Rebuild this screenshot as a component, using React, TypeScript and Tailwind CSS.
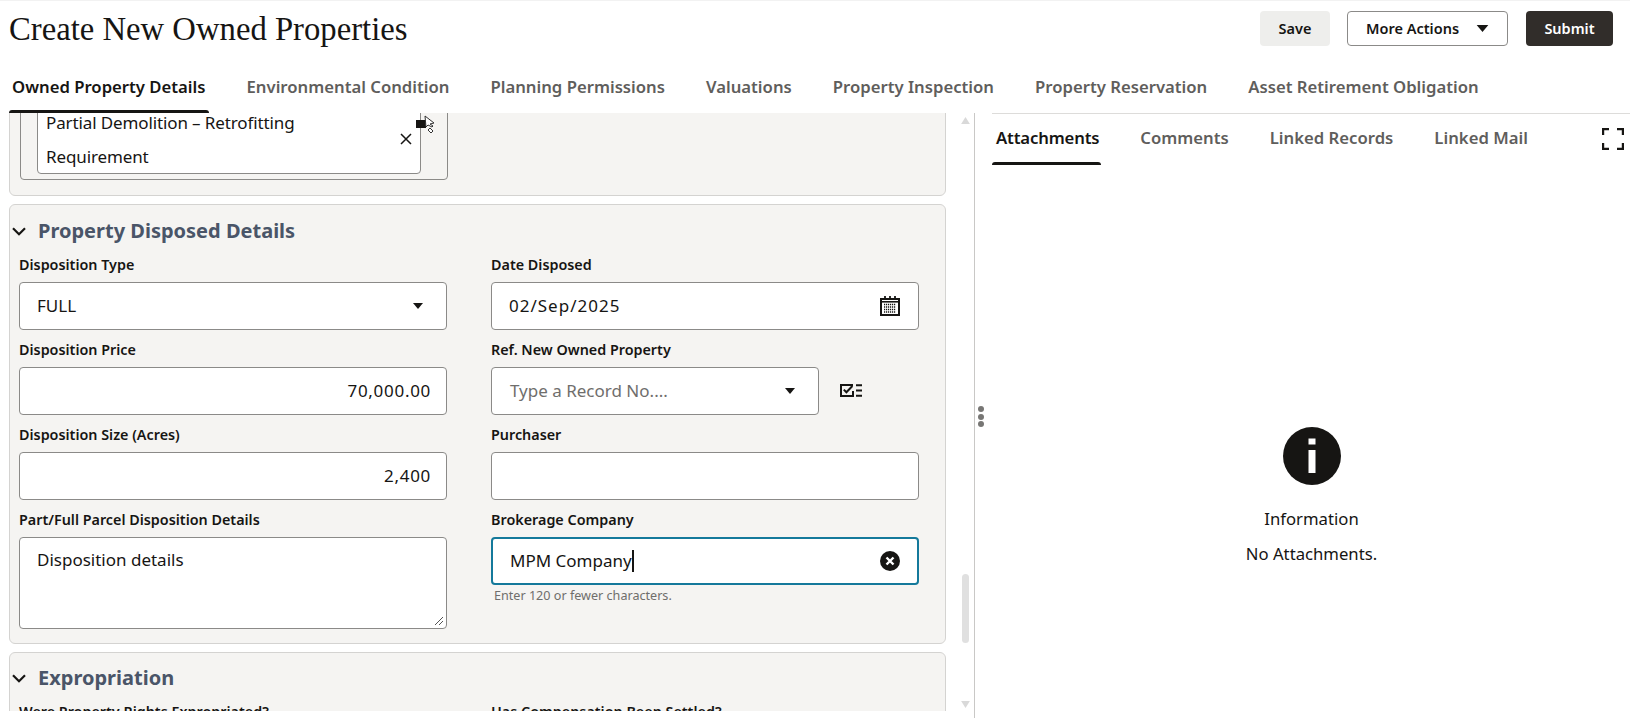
import React from 'react';

const mainTabs = [
  'Owned Property Details',
  'Environmental Condition',
  'Planning Permissions',
  'Valuations',
  'Property Inspection',
  'Property Reservation',
  'Asset Retirement Obligation',
];

const sideTabs = ['Attachments', 'Comments', 'Linked Records', 'Linked Mail'];

const Caret = ({ className = '' }: { className?: string }) => (
  <svg viewBox="0 0 10 6" className={`w-[10px] h-[6px] shrink-0 ${className}`}>
    <path d="M0 0h10L5 6z" fill="#161513" />
  </svg>
);

const Chevron = () => (
  <svg viewBox="0 0 14 9" className="w-[14px] h-[9px] shrink-0" fill="none">
    <path d="M1 1.2l6 6 6-6" stroke="#161513" strokeWidth="2.2" />
  </svg>
);

const CalendarIcon = () => (
  <svg viewBox="0 0 20 20" className="w-[20px] h-[20px] shrink-0" fill="none">
    <rect x="1" y="3" width="18" height="16" stroke="#161513" strokeWidth="2" />
    <path d="M1 5.8h18" stroke="#161513" strokeWidth="1.6" />
    <path d="M5 0v3M10 0v3M15 0v3" stroke="#161513" strokeWidth="1.8" />
    <path d="M4 8.5h12M4 11h12M4 13.5h12M4 16h12" stroke="#161513" strokeWidth="1.4" strokeDasharray="1.2 0.8" />
  </svg>
);

const ChecklistIcon = () => (
  <svg viewBox="0 0 22 13" className="w-[22px] h-[13px] ml-[21px] -mt-[2px] shrink-0" fill="none">
    <path d="M13 1H1v11h12V7" stroke="#161513" strokeWidth="2" />
    <path d="M3.8 5.6l2.6 2.7 6-6.3" stroke="#161513" strokeWidth="2" />
    <path d="M16 1.2h6M16 6.5h6M16 11.8h6" stroke="#161513" strokeWidth="2" />
  </svg>
);

const ClearIcon = () => (
  <svg viewBox="0 0 20 20" className="w-[20px] h-[20px] shrink-0">
    <circle cx="10" cy="10" r="10" fill="#161513" />
    <path d="M6.5 6.5l7 7M13.5 6.5l-7 7" stroke="#fff" strokeWidth="2.4" />
  </svg>
);

const ExpandIcon = () => (
  <svg viewBox="0 0 22 22" className="w-[22px] h-[22px]" fill="none">
    <path d="M1 7V1h6M15 1h6v6M21 15v6h-6M7 21H1v-6" stroke="#161513" strokeWidth="2.4" />
  </svg>
);

const ResizeHandle = () => (
  <svg viewBox="0 0 10 10" className="absolute right-[2px] bottom-[2px] w-[10px] h-[10px]" fill="none">
    <path d="M1 9l8-8M5 9l4-4" stroke="#555" strokeWidth="1" />
  </svg>
);

// Shared box for every text field on the form
const Box = ({
  children,
  right,
  align = 'left',
  className = '',
}: {
  children?: React.ReactNode;
  right?: React.ReactNode;
  align?: 'left' | 'right';
  className?: string;
}) => (
  <div className={`h-[48px] flex items-center rounded-[4px] border border-[#8b8a88] bg-white pl-[17px] ${align === 'right' ? 'pr-[15px]' : 'pr-[16px]'} text-[17px] text-[#161513] ${className}`}>
    <div className={`flex-1 min-w-0 ${align === 'right' ? 'text-right tracking-[0.7px]' : ''}`}>{children}</div>
    {right}
  </div>
);

const Field = ({ label, children }: { label: string; children: React.ReactNode }) => (
  <div className="min-w-0">
    <label className="block h-[20px] mb-[7px] text-[14.35px] leading-[20px] font-semibold text-[#161513]">{label}</label>
    {children}
  </div>
);

const SectionTitle = ({ title }: { title: string }) => (
  <div className="flex items-center h-[28px]">
    <span className="ml-[2px] w-[26px] flex"><Chevron /></span>
    <h2 className="text-[20px] leading-[28px] font-bold text-[#4a5568]">{title}</h2>
  </div>
);

const panel = 'rounded-[6px] border border-[#d4d3d1] bg-[#f5f4f2]';

export default function App() {
  return (
    <div className="w-[1630px] h-[723px] overflow-hidden bg-white border-t border-[#f2f2f2] font-['Noto_Sans',sans-serif] text-[#161513]">
      {/* Page header */}
      <header className="h-[57px] flex items-start justify-between pl-[9px] pr-[17px]">
        <h1 className="mt-[5.5px] text-[32.7px] leading-[44px] font-['Liberation_Serif',serif] text-[#161513]">Create New Owned Properties</h1>
        <div className="mt-[10px] flex items-center text-[14.5px] font-semibold">
          <button className="w-[70px] h-[35px] rounded-[4px] bg-[#eeeeec]">Save</button>
          <button className="ml-[17px] w-[161px] h-[35px] rounded-[4px] border border-[#8b8a88] bg-white flex items-center pl-[18px]">
            More Actions
            <Caret className="ml-[17px] !w-[13px] !h-[7px]" />
          </button>
          <button className="ml-[18px] w-[87px] h-[35px] rounded-[4px] bg-[#312d2a] text-white">Submit</button>
        </div>
      </header>

      <nav className="h-[55px] flex pl-[9px] gap-[35px]">
        {mainTabs.map((tab, i) => (
          <div key={tab} className="flex flex-col px-[3px]">
            <span className={`flex-1 pt-[6px] flex items-center text-[16.7px] font-semibold whitespace-nowrap ${i === 0 ? 'text-[#161513]' : 'text-[#5f5e5c]'}`}>{tab}</span>
            <span className={`h-[3px] -mx-[3px] rounded-t-[3px] ${i === 0 ? 'bg-[#161513]' : ''}`}></span>
          </div>
        ))}
      </nav>

      <div className="flex h-[610px] items-start">
        {/* Form column */}
        <div className="w-[975px] h-[605px] flex border-r border-[#c9c8c6]">
          <div className="w-[946px] h-[598px] pl-[9px] overflow-hidden">
            <div className="-mt-[25px] flex flex-col gap-[8px]">
              <section className={`${panel} h-[108px] pt-[8px] pl-[10px]`}>
                <div className="w-[428px] h-[83px] rounded-[4px] border border-[#8b8a88] pl-[16px] pt-[7px]">
                  <div className="relative w-[384px] h-[69px] rounded-[4px] border border-[#8b8a88] bg-white pl-[8px] pr-[40px] text-[17px] tracking-[-0.12px] leading-[34px]">
                    <div>Partial Demolition – Retrofitting Requirement</div>
                    <svg viewBox="0 0 12 12" className="absolute right-[8px] bottom-[28px] w-[12px] h-[12px]" fill="none">
                      <path d="M1 1l10 10M11 1L1 11" stroke="#161513" strokeWidth="1.5" />
                    </svg>
                    {/* resize handle and mouse pointer from the capture */}
                    <span className="absolute -right-[6px] top-[14px] w-[10px] h-[8px] bg-[#161513]"></span>
                    <svg viewBox="0 0 11 19" className="absolute -right-[15px] top-[9px] w-[11px] h-[19px]" fill="#fff" stroke="#333" strokeWidth="1">
                      <path d="M1 1l9 7-4 1 3 2-1 1-4-2-2 2z" />
                      <path d="M6 13l3 3-2 2-3-3z" />
                    </svg>
                  </div>
                </div>
              </section>

              <section className={`${panel} pb-[14px]`}>
                <div className="pt-[12px] mb-[10px]">
                  <SectionTitle title="Property Disposed Details" />
                </div>
                <div className="pl-[9px] grid grid-cols-[428px_428px] gap-x-[44px] gap-y-[10px]">
                  <Field label="Disposition Type">
                    <Box right={<Caret className="mr-[7px]" />}>FULL</Box>
                  </Field>
                  <Field label="Date Disposed">
                    <Box className="!pr-[18px]" right={<CalendarIcon />}>
                      <span className="tracking-[1px]">02/Sep/2025</span>
                    </Box>
                  </Field>
                  <Field label="Disposition Price">
                    <Box align="right">70,000.00</Box>
                  </Field>
                  <Field label="Ref. New Owned Property">
                    <div className="flex items-center">
                      <Box className="w-[328px] !pl-[18px]" right={<Caret className="mr-[7px]" />}>
                        <span className="text-[#6f6e6c]">Type a Record No....</span>
                      </Box>
                      <ChecklistIcon />
                    </div>
                  </Field>
                  <Field label="Disposition Size (Acres)">
                    <Box align="right">2,400</Box>
                  </Field>
                  <Field label="Purchaser">
                    <Box />
                  </Field>
                  <Field label="Part/Full Parcel Disposition Details">
                    <div className="relative h-[92px] rounded-[4px] border border-[#8b8a88] bg-white pl-[17px] pt-[10px] text-[17px] leading-[24px]">
                      Disposition details
                      <ResizeHandle />
                    </div>
                  </Field>
                  <Field label="Brokerage Company">
                    <div className="h-[48px] flex items-center rounded-[4px] border-2 border-[#14799b] bg-white pl-[17px] pr-[17px] text-[17px]">
                      <div className="flex-1 flex items-center">
                        MPM Company
                        <span className="w-[2px] h-[22px] bg-[#161513]"></span>
                      </div>
                      <ClearIcon />
                    </div>
                    <p className="mt-[3px] ml-[3px] text-[12.6px] leading-[16px] text-[#6f6e6c]">Enter 120 or fewer characters.</p>
                  </Field>
                </div>
              </section>

              <section className={panel}>
                <div className="pt-[11px] mb-[10px]">
                  <SectionTitle title="Expropriation" />
                </div>
                <div className="pl-[9px] grid grid-cols-[428px_428px] gap-x-[44px]">
                  <Field label="Were Property Rights Expropriated?"><Box /></Field>
                  <Field label="Has Compensation Been Settled?"><Box /></Field>
                </div>
              </section>
            </div>
          </div>

          {/* Scrollbar */}
          <div className="flex-1 flex flex-col items-center pt-[4px] pl-[10px]">
            <svg viewBox="0 0 10 8" className="w-[9px] h-[7px]"><path d="M5 0l5 8H0z" fill="#d9d9d9" /></svg>
            <div className="mt-[450px] w-[7px] h-[69px] rounded-[4px] bg-[#e0e0e0]"></div>
            <svg viewBox="0 0 10 8" className="mt-[58px] w-[9px] h-[7px]"><path d="M0 0h10L5 8z" fill="#d9d9d9" /></svg>
          </div>
        </div>

        {/* Side panel */}
        <div className="flex-1 h-full flex flex-col relative">
          {/* splitter dots */}
          <div className="absolute left-[3px] top-[293px] flex flex-col gap-[1.5px]">
            <span className="w-[6px] h-[6px] rounded-full bg-[#777674]"></span>
            <span className="w-[6px] h-[6px] rounded-full bg-[#777674]"></span>
            <span className="w-[6px] h-[6px] rounded-full bg-[#777674]"></span>
          </div>
          <div className="ml-[17px] border-t border-[#dddcda] h-[52px] flex items-stretch">
            <div className="flex-1 flex gap-[35px]">
              {sideTabs.map((tab, i) => (
                <div key={tab} className="flex flex-col pl-[4px] pr-[2px]">
                  <span className={`flex-1 flex items-center text-[16.7px] font-semibold whitespace-nowrap ${i === 0 ? 'text-[#161513] tracking-[-0.15px]' : 'text-[#5f5e5c]'}`}>{tab}</span>
                  <span className={`h-[3px] -ml-[4px] -mr-[2px] rounded-t-[3px] ${i === 0 ? 'bg-[#161513]' : ''}`}></span>
                </div>
              ))}
            </div>
            <div className="mr-[6px] pt-[14px]"><ExpandIcon /></div>
          </div>
          <div className="flex flex-col items-center pt-[262px] pl-[18px]">
            <svg viewBox="0 0 58 58" className="w-[58px] h-[58px]">
              <circle cx="29" cy="29" r="29" fill="#161513" />
              <rect x="25.5" y="11.5" width="7" height="6" fill="#fff" />
              <rect x="25.5" y="23" width="7" height="23" fill="#fff" />
            </svg>
            <p className="mt-[22px] text-[16.7px] leading-[24px]">Information</p>
            <p className="mt-[11px] text-[16.7px] leading-[24px]">No Attachments.</p>
          </div>
        </div>
      </div>
    </div>
  );
}
